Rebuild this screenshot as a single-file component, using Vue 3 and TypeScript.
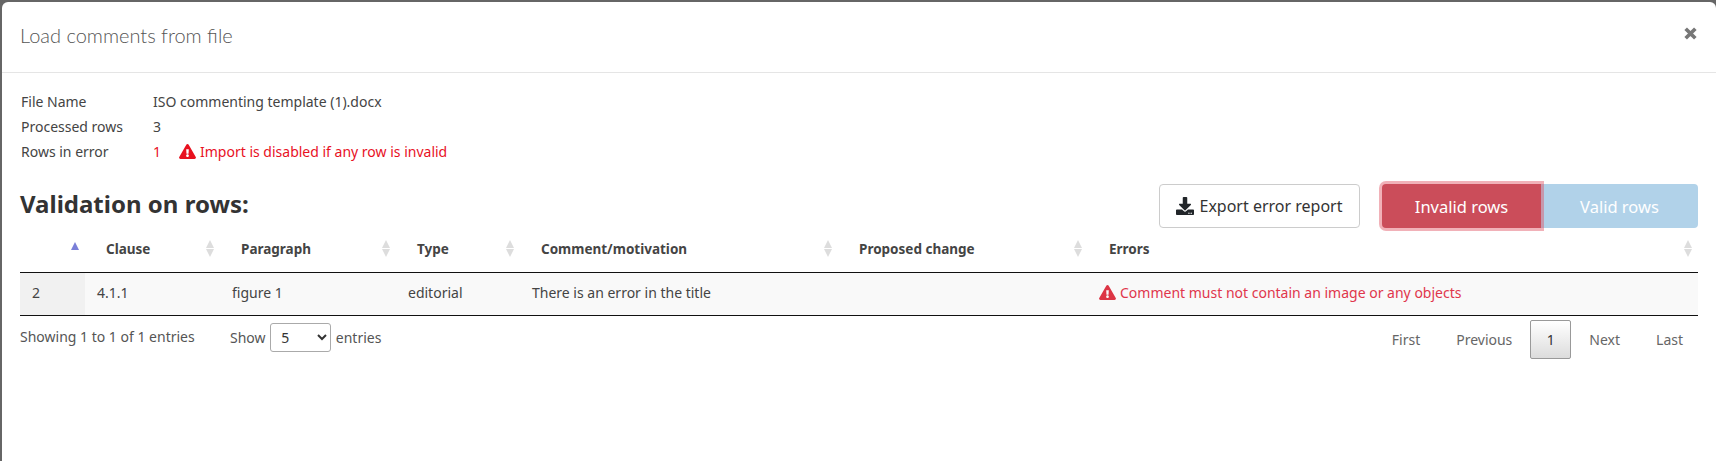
<script setup lang="ts">
interface Column {
  label: string;
}

const columns: Column[] = [
  { label: "" },
  { label: "Clause" },
  { label: "Paragraph" },
  { label: "Type" },
  { label: "Comment/motivation" },
  { label: "Proposed change" },
  { label: "Errors" },
];

const cells = ["2", "4.1.1", "figure 1", "editorial", "There is an error in the title", ""];
const pages = ["First", "Previous", "1", "Next", "Last"];

const warnPath =
  "M569.517 440.013C587.975 472.007 564.806 512 527.94 512H48.054c-36.937 0-59.999-40.055-41.577-71.987L246.423 23.985c18.467-32.009 64.72-31.951 83.154 0l239.94 416.028zM288 354c-25.405 0-46 20.595-46 46s20.595 46 46 46 46-20.595 46-46-20.595-46-46-46zm-43.673-165.346l7.418 136c.347 6.364 5.609 11.346 11.982 11.346h48.546c6.373 0 11.635-4.982 11.982-11.346l7.418-136c.375-6.874-5.098-12.654-11.982-12.654h-63.383c-6.884 0-12.356 5.78-11.981 12.654z";
</script>

<template>
  <div class="backdrop">
    <div class="modal">
      <header class="modal-head">
        <h4>Load comments from file</h4>
        <svg class="close" viewBox="0 0 14 14">
          <path d="M2.500 2.500 11.500 11.500M11.500 2.500 2.500 11.500" stroke="currentColor" stroke-width="3.400" />
        </svg>
      </header>
      <section class="modal-body">
        <dl class="summary">
          <dt>File Name</dt>
          <dd>ISO commenting template (1).docx</dd>
          <dt>Processed rows</dt>
          <dd>3</dd>
          <dt>Rows in error</dt>
          <dd class="err">
            <span class="err-count">1</span>
            <svg class="warn" viewBox="0 0 576 512"><path fill="currentColor" :d="warnPath" /></svg>
            Import is disabled if any row is invalid
          </dd>
        </dl>

        <div class="toolbar">
          <h3>Validation on rows:</h3>
          <button class="export">
            <svg class="dl" viewBox="0 0 512 512">
              <path
                fill="currentColor"
                d="M216 0h80c13.300 0 24 10.700 24 24v168h87.700c17.800 0 26.700 21.500 14.100 34.100L269.700 378.300c-7.500 7.500-19.800 7.500-27.300 0L90.100 226.100c-12.600-12.600-3.700-34.100 14.100-34.100H192V24c0-13.300 10.700-24 24-24zm296 376v112c0 13.300-10.700 24-24 24H24c-13.300 0-24-10.700-24-24V376c0-13.300 10.700-24 24-24h146.700l49 49c20.100 20.100 52.500 20.100 72.600 0l49-49H488c13.300 0 24 10.700 24 24zm-124 88c0-11-9-20-20-20s-20 9-20 20 9 20 20 20 20-9 20-20zm64 0c0-11-9-20-20-20s-20 9-20 20 9 20 20 20 20-9 20-20z"
              />
            </svg>
            Export error report
          </button>
          <div class="switch">
            <button class="invalid">Invalid rows</button>
            <button class="valid">Valid rows</button>
          </div>
        </div>

        <div class="table">
          <div v-for="(c, i) in columns" :key="i" class="th">
            <span>{{ c.label }}</span>
            <span class="sort" :class="{ active: i === 0 }">
              <i class="up"></i>
              <i v-if="i > 0" class="down"></i>
            </span>
          </div>
          <div v-for="(text, i) in cells" :key="'c' + i" class="td" :class="{ first: i === 0 }">{{ text }}</div>
          <div class="td row-err">
            <svg class="warn" viewBox="0 0 576 512"><path fill="currentColor" :d="warnPath" /></svg>
            Comment must not contain an image or any objects
          </div>
        </div>

        <div class="foot">
          <span class="info">Showing 1 to 1 of 1 entries</span>
          <label class="length">
            Show
            <select><option>5</option></select>
            entries
          </label>
          <nav class="pager">
            <a v-for="p in pages" :key="p" :class="{ current: p === '1' }">{{ p }}</a>
          </nav>
        </div>
      </section>
    </div>
  </div>
</template>

<style>
html,
body {
  margin: 0;
  overflow: hidden;
}
</style>

<style scoped>
.backdrop {
  width: 1716px;
  height: 461px;
  padding: 2px 0 0 2px;
  box-sizing: border-box;
  background: #666;
  font-family: "Noto Sans", "Lato", sans-serif;
  font-size: 14px;
  color: #333;
}
.modal {
  height: 100%;
  background: #fff;
  border-radius: 6px 6px 0 0;
}
.modal-head {
  height: 70px;
  border-bottom: 1px solid #e5e5e5;
  display: flex;
  align-items: center;
  justify-content: space-between;
  padding: 0 18px 0 18px;
}
.modal-head h4 {
  margin: -4px 0 0 0;
  font-family: "Lato", sans-serif;
  font-size: 20px;
  font-weight: 300;
  color: #555;
}
.close {
  width: 15px;
  height: 15px;
  color: #777;
  margin-top: -8px;
}
.modal-body {
  padding: 16px 18px 0 18px;
}
.summary {
  margin: 0 0 0 1px;
  display: grid;
  grid-template-columns: 132px 1fr;
  grid-auto-rows: 25px;
  align-items: center;
}
.summary dt,
.summary dd {
  margin: 0;
  color: #444;
}
.summary .err {
  color: #e8111f;
  display: flex;
  align-items: center;
}
.err-count {
  width: 26px;
}
.warn {
  width: 17px;
  height: 15px;
  margin-right: 4px;
}
.toolbar {
  display: flex;
  align-items: center;
  margin: 20px 0 0 0;
  height: 44px;
}
.toolbar h3 {
  margin: 0 auto 6px 0;
  font-size: 24px;
  font-weight: 700;
  color: #333;
}
.export {
  width: 201px;
  height: 44px;
  background: #fff;
  border: 1px solid #ccc;
  border-radius: 4px;
  color: #333;
  font: inherit;
  font-size: 16px;
  display: flex;
  align-items: center;
  justify-content: center;
  gap: 5px;
  padding: 0;
}
.dl {
  width: 18px;
  height: 18px;
  color: #212529;
}
.switch {
  display: flex;
  margin-left: 22px;
}
.switch button {
  height: 44px;
  border: none;
  color: #fff;
  font: inherit;
  font-size: 16.5px;
  padding: 0;
}
.invalid {
  width: 159px;
  background: #cb4d5a;
  border-radius: 4px 0 0 4px;
  box-shadow: 0 0 0 3px rgba(225, 83, 97, 0.45);
  position: relative;
}
.valid {
  width: 157px;
  background: #b1d2e9;
  border-radius: 0 4px 4px 0;
}
.table {
  display: grid;
  grid-template-columns: 65px 135px 176px 124px 318px 250px 610px;
}
.th {
  height: 45px;
  border-bottom: 1px solid #111;
  display: flex;
  align-items: center;
  justify-content: space-between;
  padding: 0 6px 3px 21px;
  box-sizing: border-box;
  font-size: 13.5px;
  font-weight: 700;
  color: #444;
}
.sort {
  display: flex;
  flex-direction: column;
  gap: 1px;
}
.sort .up {
  border: 4px solid transparent;
  border-top: none;
  border-bottom: 8px solid #ddd;
}
.sort .down {
  border: 4px solid transparent;
  border-bottom: none;
  border-top: 8px solid #ddd;
}
.sort.active {
  margin-top: -6px;
}
.sort.active .up {
  border-bottom-color: #7a7fd8;
}
.td {
  height: 43px;
  box-sizing: border-box;
  background: #f9f9f9;
  border-bottom: 1px solid #111;
  display: flex;
  align-items: center;
  padding: 0 0 4px 12px;
  color: #444;
}
.td.first {
  background: #f1f1f1;
}
.td.row-err {
  color: #e0364c;
  padding-left: 11px;
}
.row-err .warn {
  color: #dc3545;
}
.foot {
  display: flex;
  align-items: center;
  height: 47px;
  color: #555;
}
.info {
  width: 210px;
  margin-bottom: 7px;
}
.length {
  margin-bottom: 4px;
}
.length select {
  width: 61px;
  height: 29px;
  margin: 0 1px;
  padding-left: 6px;
  background: #fff;
  border: 1px solid #aaa;
  border-radius: 3px;
  font: inherit;
  color: #333;
}
.pager {
  margin: 0 -3px 0 auto;
  display: flex;
  align-items: center;
}
.pager a {
  padding: 0 17px;
  line-height: 37px;
  color: #666;
  border: 1px solid transparent;
}
.pager a.current {
  width: 41px;
  box-sizing: border-box;
  padding: 0;
  text-align: center;
  color: #333;
  border-color: #999;
  border-radius: 2px;
  background: linear-gradient(#fff, #dcdcdc);
}
</style>
